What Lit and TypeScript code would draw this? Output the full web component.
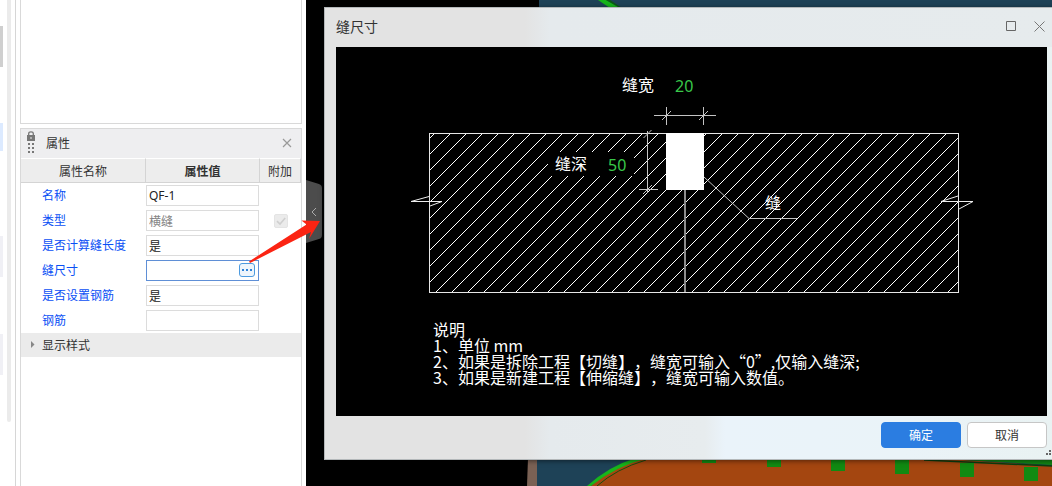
import { LitElement, html, svg, css, nothing } from "lit";
import { customElement, property } from "lit/decorators.js";
import { classMap } from "lit/directives/class-map.js";

const FONT = css`"Noto Sans CJK SC", "Noto Sans", sans-serif`;
const LATIN_FONT = css`"Noto Sans", "Noto Sans CJK SC", sans-serif`;

interface PropertyRow {
  id: string;
  name: string;
  value: string;
  disabled?: boolean;
  extra?: boolean;
  picker?: boolean;
}

const ROWS: PropertyRow[] = [
  { id: "name", name: "名称", value: "QF-1" },
  { id: "type", name: "类型", value: "横缝", disabled: true, extra: true },
  { id: "length", name: "是否计算缝长度", value: "是" },
  { id: "size", name: "缝尺寸", value: "", picker: true },
  { id: "rebar-on", name: "是否设置钢筋", value: "是" },
  { id: "rebar", name: "钢筋", value: "" },
];

@customElement("property-panel")
export class PropertyPanel extends LitElement {
  static styles = css`
    :host { display: flex; flex-direction: column; flex: 1; border: 1px solid #d9d9d9; border-bottom: 0; background: #fff;
      font: 12px/16px ${FONT}; color: #333; }
    .title { box-sizing: border-box; display: flex; align-items: center; height: 29px; padding: 0 9px 1px 5px; background: #eeeef0; }
    .grip { width: 10px; height: 24px; margin-right: 10px; }
    h2 { flex: 1; margin: 0; font-size: 12px; font-weight: 400; }
    .close { display: flex; padding: 0; border: 0; background: none; }
    table { width: 100%; border-collapse: separate; border-spacing: 0; table-layout: fixed; }
    .col-name { width: 125px; }
    .col-extra { width: 41px; }
    th { box-sizing: border-box; height: 25px; padding: 0; background: #ededed; border-bottom: 1px solid #d4d4d4;
      border-top: 1px solid #fff; border-right: 1px solid #d4d4d4; font-weight: 400; }
    .strong { font-weight: 700; }
    td { height: 25px; padding: 0; }
    label { display: block; padding: 0 0 1px 21px; color: #0a50f5; white-space: nowrap; }
    .field { position: relative; display: flex; margin-right: 1px; }
    input[type="text"] { box-sizing: border-box; width: 100%; height: 21px; padding: 0 2px; border: 1px solid #dcdcdc;
      border-radius: 0; background: #fff; font: 12px/16px ${LATIN_FONT}; color: #222; outline: none; }
    input[type="text"]:disabled { color: #858585; }
    .active input[type="text"] { border-color: #5f8fd6; }
    .more { position: absolute; right: 4px; top: 3px; width: 16px; height: 14px; box-sizing: border-box; padding: 0; display: flex;
      border: 1px solid #4d9be0; border-radius: 3px; background: #eef5fc; }
    .center { text-align: center; }
    .check { appearance: none; display: block; width: 14px; height: 14px; margin: 0 auto; border-radius: 2px; border: 1px solid #e4e4e4;
      background: #ebebeb; }
    .tick { position: relative; display: block; width: 14px; margin: 0 auto; }
    .tick svg { position: absolute; left: 0; top: 0; }
    .group { display: flex; align-items: center; width: 100%; height: 24px; padding: 0 0 0 9px; border: 0;
      background: #ebebeb; font: 12px/16px ${FONT}; color: #333; text-align: left; gap: 7px; }
  `;

  private row(r: PropertyRow) {
    return html`<tr>
      <td><label for=${r.id}>${r.name}</label></td>
      <td>
        <div class=${classMap({ field: true, active: !!r.picker })}>
          <input id=${r.id} type="text" .value=${r.value} ?disabled=${!!r.disabled} />
          ${r.picker
            ? html`<button class="more" aria-label="编辑缝尺寸">
                <svg width="14" height="12" fill="#2f82d8"><path d="M2 5h2v2H2zM6 5h2v2H6zM10 5h2v2h-2z" /></svg>
              </button>`
            : nothing}
        </div>
      </td>
      <td class="center">
        ${r.extra
          ? html`<span class="tick"><input class="check" type="checkbox" checked disabled aria-label="附加" />
              <svg width="14" height="14" fill="none" stroke="#cfcfcf" stroke-width="1.6"><path d="M3 7.2 6 10 11.2 4" /></svg></span>`
          : nothing}
      </td>
    </tr>`;
  }

  render() {
    return html`
      <div class="title">
        <svg class="grip" viewBox="0 0 10 24" fill="#777">
          <path d="M1 4h8v6H1z" />
          <path d="M2.7 4.5V2.6Q2.7.8 5 .8t2.3 1.8v1.9" fill="none" stroke="#777" stroke-width="1.3" />
          <path d="M4.5 6h1v2h-1z" fill="#eee" />
          <path d="M2 12h2v2H2zM6 12h2v2H6zM2 16h2v2H2zM6 16h2v2H6zM2 20h2v2H2zM6 20h2v2H6z" />
        </svg>
        <h2>属性</h2>
        <button class="close" aria-label="关闭面板">
          <svg width="10" height="10" stroke="#999" stroke-width="1.2"><path d="m1 1 8 8M9 1 1 9" /></svg>
        </button>
      </div>
      <table>
        <colgroup><col class="col-name" /><col /><col class="col-extra" /></colgroup>
        <thead><tr><th>属性名称</th><th class="strong">属性值</th><th>附加</th></tr></thead>
        <tbody>${ROWS.map((r) => this.row(r))}</tbody>
      </table>
      <button class="group">
        <svg width="5" height="8" fill="#888"><path d="M1 0v7l3.5-3.5z" /></svg>显示样式
      </button>
    `;
  }
}

@customElement("joint-diagram")
export class JointDiagram extends LitElement {
  @property({ type: Number }) width = 20;
  @property({ type: Number }) depth = 50;

  static styles = css`
    :host { display: block; background: #000; }
    svg { display: block; width: 100%; height: auto; }
    text { font: 16px/16px ${FONT}; fill: #fff; text-spacing-trim: space-all; }
    .value { font-family: ${LATIN_FONT}; fill: #39c84a; }
    .outline { fill: none; stroke: #e6e6e6; }
    .hatch { stroke: #fff; shape-rendering: crispEdges; }
    .dim { fill: none; stroke: #c4c4c4; }
    .seam { stroke: #8c8c8c; stroke-width: 2; }
  `;

  private hatch() {
    const left = 93, right = 622, top = 87, bottom = 245;
    const lines = [];
    for (let c = 185; c < right + bottom; c += 16) {
      const x1 = Math.min(right, c - top);
      const x2 = Math.max(left, c - bottom);
      lines.push(svg`<line x1=${x1} y1=${c - x1} x2=${x2} y2=${c - x2} />`);
    }
    return lines;
  }

  render() {
    const notes = [
      "说明",
      "1、单位 mm",
      "2、如果是拆除工程【切缝】，缝宽可输入“0”,仅输入缝深;",
      "3、如果是新建工程【伸缩缝】，缝宽可输入数值。",
    ];
    return html`<svg viewBox="0 0 711 369" lang="zh-CN">
      <g class="hatch">${this.hatch()}</g>
      <rect x="212" y="105" width="86" height="24" />
      <rect class="outline" x="93.5" y="86.5" width="529" height="159" />
      <path class="seam" d="M349 143v102" />
      <rect x="330" y="86" width="38" height="57" fill="#fff" />
      <g class="dim">
        <path d="M318 68.5h62M330.5 60v18M367.5 60v18M326 73l9-9M363 73l9-9" />
        <path d="M311.5 84v62M303 142.5h19M307.500 91l8-8M307 147l9-9" />
        <path d="m368 130 45 41.500h48" />
        <path d="M93 149.500 75 154.500h31L94 159M622 149l-17 5.500h32L623 162" stroke="#eee" />
      </g>
      <text x="286" y="44">缝宽</text>
      <text class="value" x="339" y="45">${this.width}</text>
      <text x="219" y="123">缝深</text>
      <text class="value" x="272" y="124">${this.depth}</text>
      <text x="429" y="162">缝</text>
      ${notes.map((n, i) => svg`<text x="97" y=${289 + i * 16}>${n}</text>`)}
    </svg>`;
  }
}

@customElement("joint-dialog")
export class JointDialog extends LitElement {
  static styles = css`
    :host { display: flex; flex-direction: column; box-sizing: border-box; padding: 0 11px; border: 1px solid #b4b8ba;
      background: linear-gradient(90deg, #e3e3e3 200px, #e5eaed 225px, #e7ecee 380px, #eaf3fa 400px, #eaf3f8 580px, #e9f2f2);
      font: 12px/16px ${FONT}; color: #333; }
    header { box-sizing: border-box; display: flex; align-items: center; height: 39px; gap: 18px; padding: 0 1px 3px 0;
      margin: 0 -11px; padding-left: 11px; padding-right: 13px;
      background: linear-gradient(90deg, #e3e3e3 200px, #e5eaed 225px, #e6ebed); }
    h1 { flex: 1; margin: 0; font-size: 14px; line-height: 20px; font-weight: 400; }
    .icon { display: flex; padding: 0; border: 0; background: none; }
    footer { display: flex; justify-content: flex-end; gap: 6px; padding: 6px 0 11px; }
    .button { box-sizing: border-box; width: 80px; height: 26px; padding: 0; border: 1px solid #c6c6c6; border-radius: 4px;
      background: #fff; font: 12px/16px ${FONT}; color: #333; }
    .primary { border-color: #2b7de1; background: #2b7de1; color: #fff; }
    .resize { position: absolute; right: 6px; bottom: 3px; }
  `;

  render() {
    return html`
      <header>
        <h1>缝尺寸</h1>
        <button class="icon" aria-label="最大化">
          <svg width="10" height="10" fill="none" stroke="#666"><path d="M.5.5h9v9h-9z" /></svg>
        </button>
        <button class="icon" aria-label="关闭">
          <svg width="11" height="11" stroke="#777"><path d="m.5.5 10 10M10.500.5l-10 10" /></svg>
        </button>
      </header>
      <joint-diagram></joint-diagram>
      <footer>
        <button class="button primary">确定</button>
        <button class="button">取消</button>
      </footer>
      <svg class="resize" width="6" height="6" fill="#666"><path d="M0 3h2v2H0zM3 3h2v2H3zM3 0h2v2H3z" /></svg>
    `;
  }
}

@customElement("app-root")
export class AppRoot extends LitElement {
  static styles = css`
    :host { display: block; height: 100vh; overflow: hidden; }
    .page { position: relative; display: flex; height: 100%; overflow: hidden; background: #fff; }
    .rail { display: flex; flex: none; justify-content: space-between; box-sizing: border-box; width: 16px;
      padding-right: 4px; border-right: 1px solid #d6d6d6; }
    .items { display: flex; flex-direction: column; width: 3px; padding-top: 26px; }
    .item { height: 41px; background: #f0f0f5; }
    .thumb { background: #cfcfcf; margin-bottom: 56px; }
    .chosen { height: 28px; background: #dceaff; margin-bottom: 85px; }
    .plain { margin-bottom: 57px; }
    .track { width: 4px; height: calc(100% - 64px); border-radius: 0 0 2px 2px; background: #ebebeb; }
    .side { display: flex; flex: none; flex-direction: column; box-sizing: border-box; width: 290px; padding: 0 4px; gap: 4px; }
    .box { flex: none; box-sizing: border-box; height: 124px; border: 1px solid #d9d9d9; border-top: 0; }
    .canvas { position: relative; flex: 1; overflow: hidden; background: #000; }
    .scene { position: absolute; left: 0; }
    .above { top: 0; }
    .below { bottom: 0; }
    .handle { position: absolute; left: 0; top: 180px; display: flex; padding: 0; border: 0; background: none; }
    joint-dialog { position: absolute; left: 18px; right: -7px; top: 7px;
      box-shadow: 0 1px 5px rgba(0, 0, 0, 0.5); }
    .arrow { position: absolute; left: 245px; top: 215px; pointer-events: none; }
  `;

  render() {
    const blocks = [[396, 458, 5], [461, 458, 9], [525, 458, 13], [589, 460, 14], [654, 463, 14], [718, 467, 14]];
    return html`<div class="page">
      <div class="rail">
        <div class="items">
          <div class="item thumb"></div><div class="item chosen"></div>
          <div class="item plain"></div><div class="item"></div>
        </div>
        <div class="track"></div>
      </div>
      <div class="side">
        <div class="box"></div>
        <property-panel></property-panel>
      </div>
      <main class="canvas">
        <svg class="scene above" width="746" height="8">
          <path d="M233 0h513v8H233z" fill="#1e4257" />
          <path d="M292 0h8l14 8h-10z" fill="#17b51b" /><path d="m300 0 14 8h2L304 0z" fill="#0b5c12" />
        </svg>
        <svg class="scene below" width="746" height="28" viewBox="0 458 746 28">
          <path d="M222 458h10v28h-11z" fill="#7a6154" />
          <path d="M231 458h515v28H231z" fill="#1e4257" />
          <path d="M285 486q23-21 54-28h290l117 8v20z" fill="#a44610" />
          <path d="M281 486q22-20 49-28h12q-32 8-57 28z" fill="#17b51b" />
          <path d="M291 486q19-17 49-26" fill="none" stroke="#174d0e" />
          <path d="M620 458h126v7z" fill="#128614" /><path d="m618 460 128 6" stroke="#0b3f10" stroke-width="1.500" />
          ${blocks.map(([x, y, h]) => svg`<rect x=${x} y=${y} width="14" height=${h} fill="#118a12" />`)}
        </svg>
        <button class="handle" aria-label="折叠面板">
          <svg width="16" height="63"><path d="M0 0l13 4q3 1 3 4v47q0 3-3 4L0 63z" fill="#4c4c4c" />
            <path d="m10 28-4 4 4 4" fill="none" stroke="#aaa" /></svg>
        </button>
        <joint-dialog></joint-dialog>
      </main>
      <svg class="arrow" width="78" height="50" fill="#fb2413"><path d="M75 6 56.500 5.500l5 4L4 46.500l1 1.500L66 17l-2 7z" /></svg>
    </div>`;
  }
}
